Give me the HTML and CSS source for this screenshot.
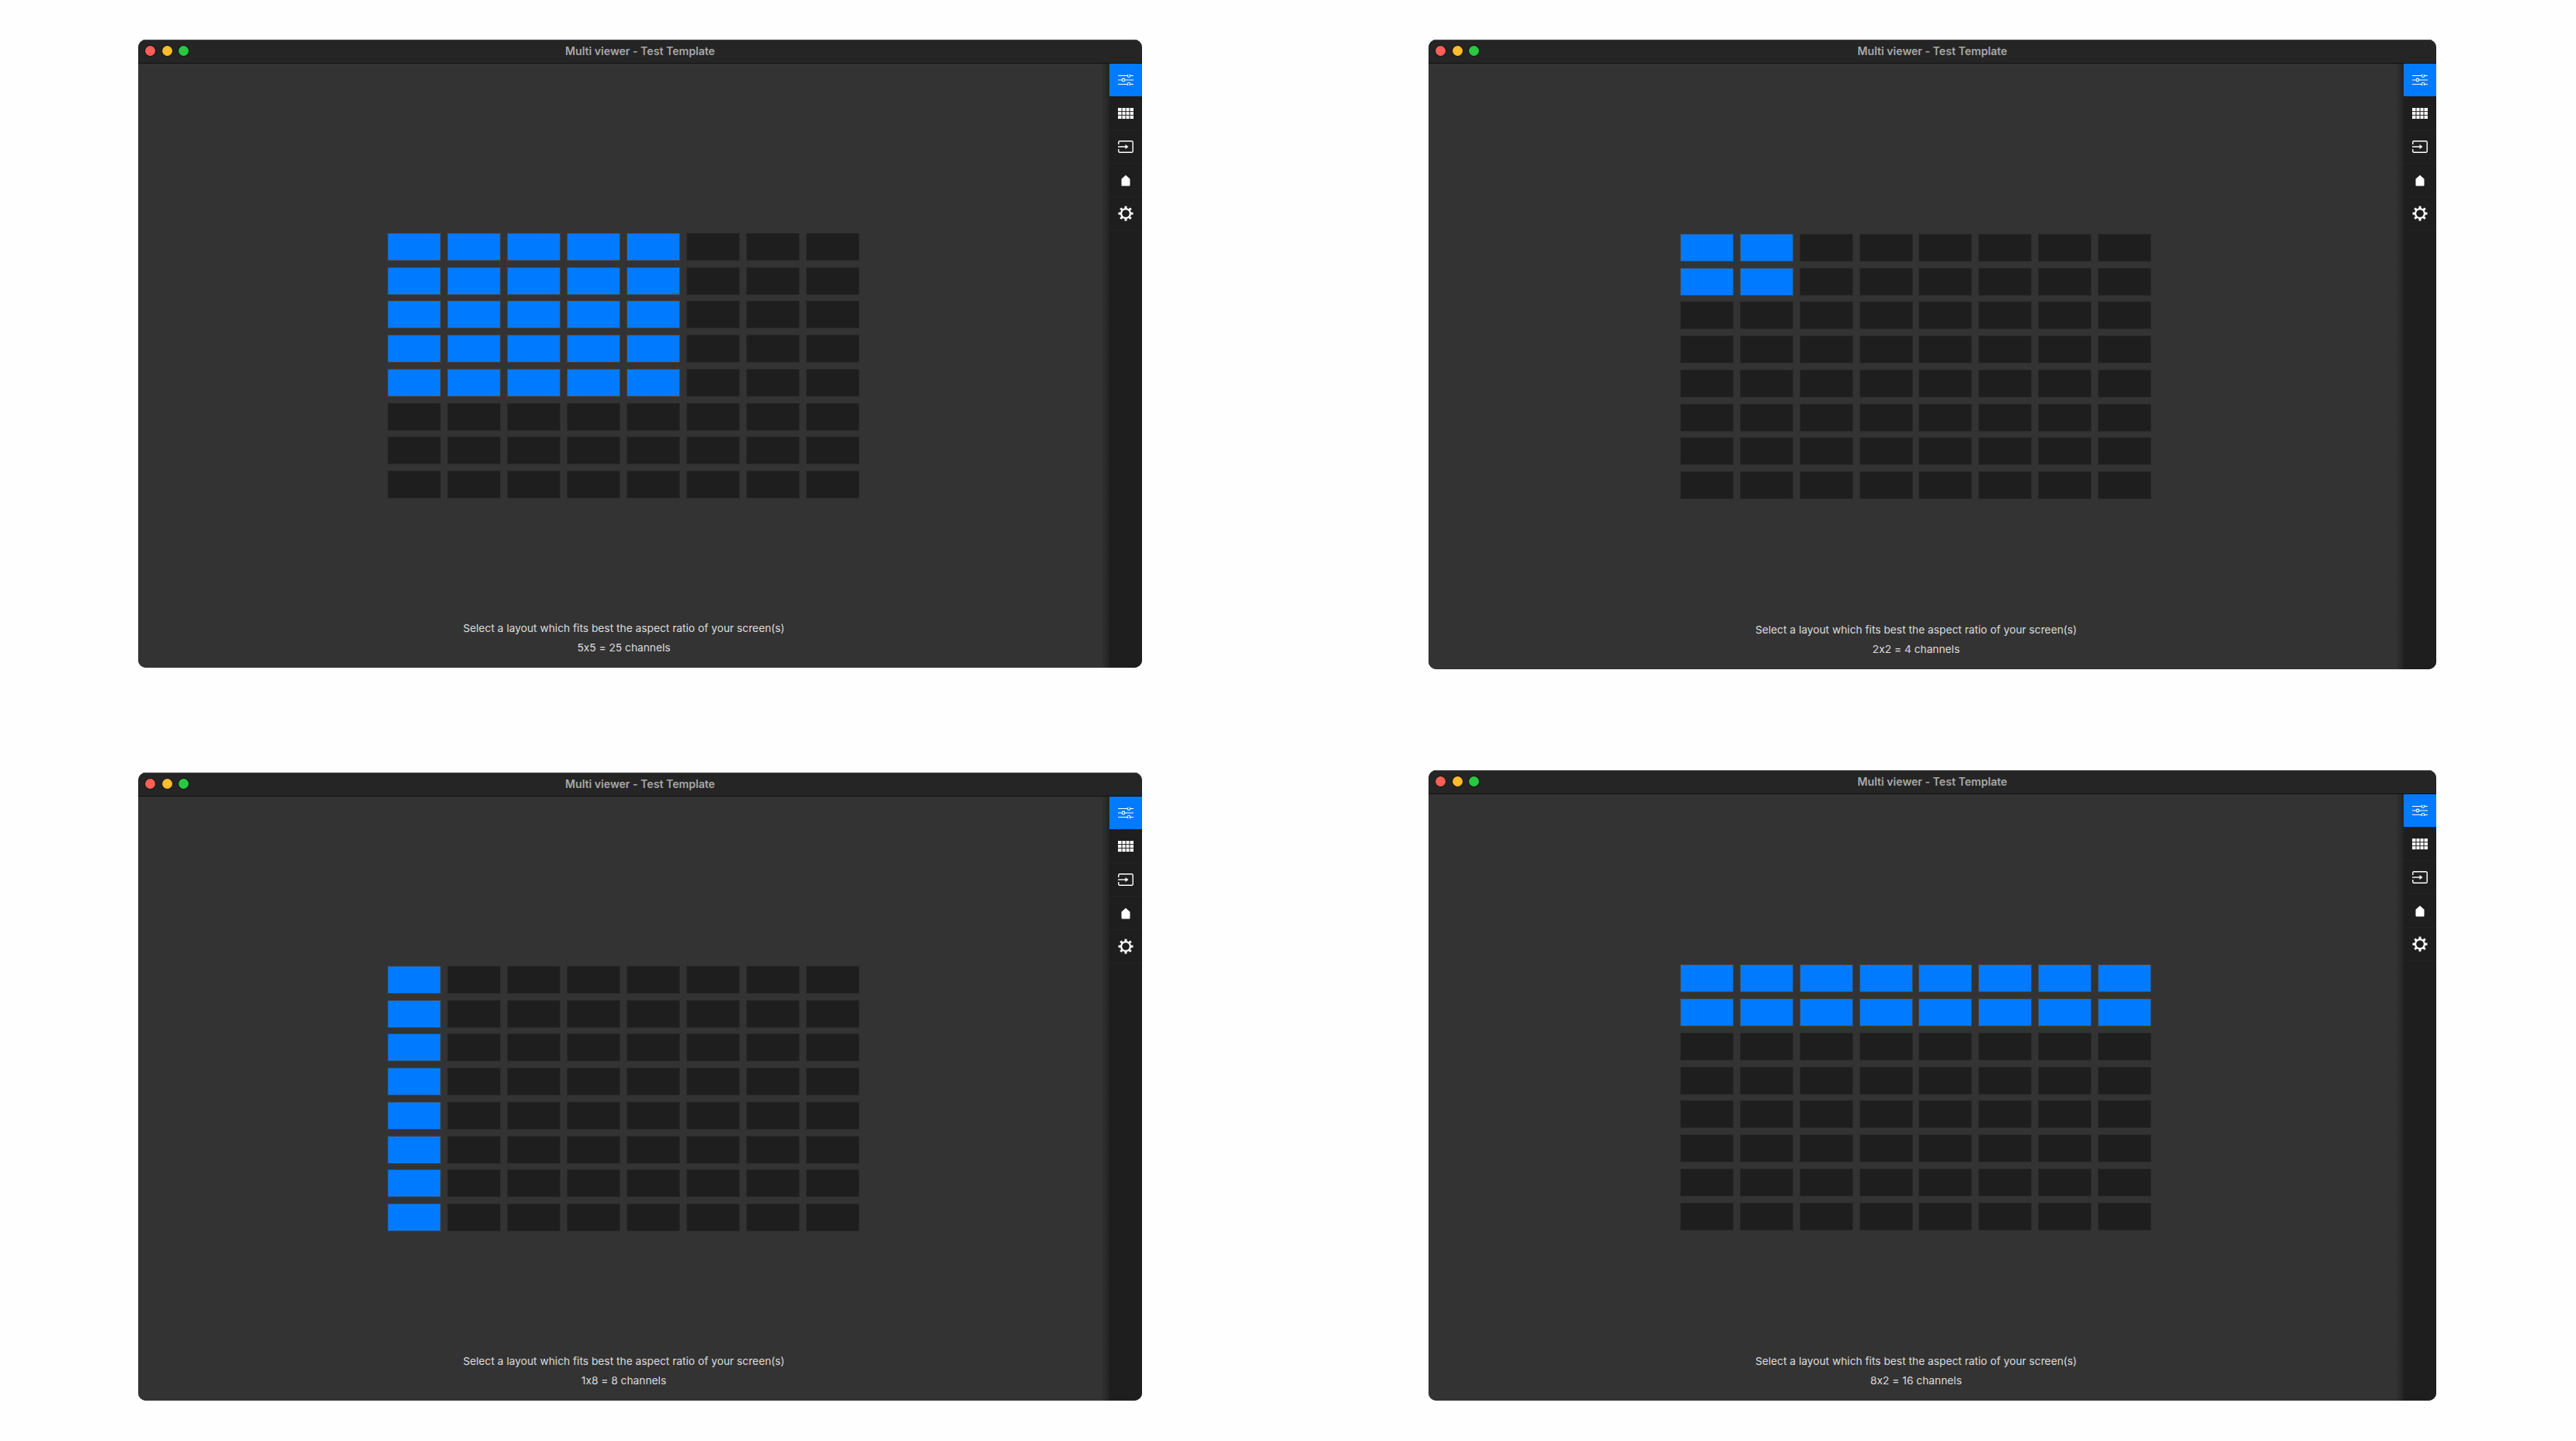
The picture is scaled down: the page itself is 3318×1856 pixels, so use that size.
FILE: index.html
```html
<!DOCTYPE html>
<html lang="en">
<head>
    <meta charset="UTF-8">
    <title>Multi viewer - Layouts</title>
    <link rel="stylesheet" href="styles.css">
</head>
<body>
    <svg class="icon-defs" width="0" height="0">
        <symbol id="icon-sliders" viewBox="0 0 20 14">
            <path d="M0 1.5H20M0 7H20M0 12.5H20" fill="none" stroke="#fff" stroke-width="1.2"/>
            <circle cx="14" cy="1.6" r="1.9" fill="#0a7aff" stroke="#fff" stroke-width="1.1"/>
            <circle cx="7" cy="7" r="1.9" fill="#0a7aff" stroke="#fff" stroke-width="1.1"/>
            <circle cx="14" cy="12.4" r="1.9" fill="#0a7aff" stroke="#fff" stroke-width="1.1"/>
        </symbol>
        <symbol id="icon-grid" viewBox="0 0 20 14">
            <path d="M0 0H20V14H0Z" fill="#fff"/>
            <path d="M5 0V14M10 0V14M15 0V14M0 4.67H20M0 9.33H20" stroke="#1e1e1e" stroke-width="1"/>
        </symbol>
        <symbol id="icon-input" viewBox="0 0 20 16">
            <path d="M.8 5V2.2A1.4 1.4 0 0 1 2.2 .8H17.8A1.4 1.4 0 0 1 19.2 2.2V13.8A1.4 1.4 0 0 1 17.8 15.2H2.2A1.4 1.4 0 0 1 .8 13.8V11" fill="none" stroke="#fff" stroke-width="1.4"/>
            <path d="M0 8H10" stroke="#fff" stroke-width="1.4"/>
            <path d="M9.5 5L13.5 8L9.500 11Z" fill="#fff"/>
        </symbol>
        <symbol id="icon-home" viewBox="0 0 12 15">
            <path d="M6 .5L11.500 5.500V13.500A1 1 0 0 1 10.500 14.500H1.500A1 1 0 0 1 .5 13.500V5.500Z" fill="#fff"/>
        </symbol>
        <symbol id="icon-gear" viewBox="0 0 20 20">
            <path d="M10 .5V19.500M.5 10H19.500M3.300 3.300L16.700 16.700M16.700 3.300L3.300 16.700" stroke="#fff" stroke-width="3"/>
            <circle cx="10" cy="10" r="7" fill="#fff"/>
            <circle cx="10" cy="10" r="4.800" fill="#1e1e1e"/>
        </symbol>
    </svg>

    <div class="row row-top">
        <section class="window window-narrow" data-cols="5" data-rows="5">
            <header class="titlebar">
                <span class="lights"><i class="light red"></i><i class="light yellow"></i><i class="light green"></i></span>
                <span class="title">Multi viewer - Test Template</span>
            </header>
            <div class="body">
                <main class="content">
                    <div class="layout-grid"></div>
                    <footer class="hint">
                        <p>Select a layout which fits best the aspect ratio of your screen(s)</p>
                        <p>5x5 = 25 channels</p>
                    </footer>
                </main>
                <nav class="sidebar">
                    <a class="tool active"><svg class="ic-sliders"><use href="#icon-sliders"/></svg></a>
                    <a class="tool"><svg class="ic-grid"><use href="#icon-grid"/></svg></a>
                    <a class="tool"><svg class="ic-input"><use href="#icon-input"/></svg></a>
                    <a class="tool"><svg class="ic-home"><use href="#icon-home"/></svg></a>
                    <a class="tool"><svg class="ic-gear"><use href="#icon-gear"/></svg></a>
                </nav>
            </div>
        </section>

        <section class="window window-wide window-tall" data-cols="2" data-rows="2">
            <header class="titlebar">
                <span class="lights"><i class="light red"></i><i class="light yellow"></i><i class="light green"></i></span>
                <span class="title">Multi viewer - Test Template</span>
            </header>
            <div class="body">
                <main class="content">
                    <div class="layout-grid"></div>
                    <footer class="hint">
                        <p>Select a layout which fits best the aspect ratio of your screen(s)</p>
                        <p>2x2 = 4 channels</p>
                    </footer>
                </main>
                <nav class="sidebar">
                    <a class="tool active"><svg class="ic-sliders"><use href="#icon-sliders"/></svg></a>
                    <a class="tool"><svg class="ic-grid"><use href="#icon-grid"/></svg></a>
                    <a class="tool"><svg class="ic-input"><use href="#icon-input"/></svg></a>
                    <a class="tool"><svg class="ic-home"><use href="#icon-home"/></svg></a>
                    <a class="tool"><svg class="ic-gear"><use href="#icon-gear"/></svg></a>
                </nav>
            </div>
        </section>
    </div>

    <div class="row row-bottom">
        <section class="window window-narrow" data-cols="1" data-rows="8">
            <header class="titlebar">
                <span class="lights"><i class="light red"></i><i class="light yellow"></i><i class="light green"></i></span>
                <span class="title">Multi viewer - Test Template</span>
            </header>
            <div class="body">
                <main class="content">
                    <div class="layout-grid"></div>
                    <footer class="hint">
                        <p>Select a layout which fits best the aspect ratio of your screen(s)</p>
                        <p>1x8 = 8 channels</p>
                    </footer>
                </main>
                <nav class="sidebar">
                    <a class="tool active"><svg class="ic-sliders"><use href="#icon-sliders"/></svg></a>
                    <a class="tool"><svg class="ic-grid"><use href="#icon-grid"/></svg></a>
                    <a class="tool"><svg class="ic-input"><use href="#icon-input"/></svg></a>
                    <a class="tool"><svg class="ic-home"><use href="#icon-home"/></svg></a>
                    <a class="tool"><svg class="ic-gear"><use href="#icon-gear"/></svg></a>
                </nav>
            </div>
        </section>

        <section class="window window-wide" data-cols="8" data-rows="2">
            <header class="titlebar">
                <span class="lights"><i class="light red"></i><i class="light yellow"></i><i class="light green"></i></span>
                <span class="title">Multi viewer - Test Template</span>
            </header>
            <div class="body">
                <main class="content">
                    <div class="layout-grid"></div>
                    <footer class="hint">
                        <p>Select a layout which fits best the aspect ratio of your screen(s)</p>
                        <p>8x2 = 16 channels</p>
                    </footer>
                </main>
                <nav class="sidebar">
                    <a class="tool active"><svg class="ic-sliders"><use href="#icon-sliders"/></svg></a>
                    <a class="tool"><svg class="ic-grid"><use href="#icon-grid"/></svg></a>
                    <a class="tool"><svg class="ic-input"><use href="#icon-input"/></svg></a>
                    <a class="tool"><svg class="ic-home"><use href="#icon-home"/></svg></a>
                    <a class="tool"><svg class="ic-gear"><use href="#icon-gear"/></svg></a>
                </nav>
            </div>
        </section>
    </div>

    <script src="script.js"></script>
</body>
</html>
```

FILE: styles.css
```css
body {
    margin: 0;
    background-color: #fefefe;
    font-family: Inter, "Liberation Sans", sans-serif;
    font-feature-settings: "calt" 0;
    overflow: hidden;
}
.icon-defs {
    position: absolute;
}
.row {
    display: flex;
    gap: 369px;
    padding-left: 178px;
}
.row-top {
    height: 992px;
    padding-top: 51px;
    box-sizing: border-box;
    align-items: flex-start;
}
.row-bottom {
    height: 812px;
    align-items: flex-end;
}
.window {
    display: flex;
    flex-direction: column;
    height: 809px;
    border-radius: 10px;
    overflow: hidden;
    background-color: #333;
}
.window-narrow {
    width: 1293px;
}
.window-wide {
    width: 1298px;
}
.window-tall {
    height: 811px;
}
.row-bottom .window-wide {
    height: 812px;
}

/* title bar */
.titlebar {
    display: flex;
    align-items: center;
    justify-content: center;
    position: relative;
    height: 31px;
    padding-bottom: 2px;
    box-sizing: border-box;
    background-color: #252525;
    border-top: 1px solid #4d4d4d;
    border-bottom: 1px solid #111;
}
.lights {
    position: absolute;
    left: 9px;
    top: 7px;
    display: flex;
    gap: 8.5px;
}
.light {
    width: 13px;
    height: 13px;
    border-radius: 50%;
    box-shadow: 0 0 0 1px #161616;
}
.red { background-color: #ff5f57; }
.yellow { background-color: #febc2e; }
.green { background-color: #28c840; }
.title {
    font-size: 14.1px;
    font-weight: 600;
    color: #a8a8a8;
}

/* main area */
.body {
    flex: 1;
    display: flex;
    min-height: 0;
}
.content {
    flex: 1;
    display: grid;
    grid-template-rows: 62px 1fr 62px;
    justify-items: center;
    align-items: center;
    background: linear-gradient(to left, #232323 0, #333 10px);
}
.layout-grid {
    grid-row: 2;
    display: grid;
    grid-template-columns: repeat(8, 69px);
    grid-auto-rows: 36px;
    column-gap: 7.9px;
    row-gap: 7.8px;
    margin-left: -1px;
}
.cell {
    box-sizing: border-box;
    background-color: #1e1e1e;
    border: 1px solid #2a2a2a;
}
.cell.on {
    background-color: #007aff;
    border-color: #444;
}
.hint {
    grid-row: 3;
    text-align: center;
    align-self: start;
    margin-top: -1px;
    font-size: 13.75px;
    line-height: 25px;
    color: #dcdcdc;
}
.hint p {
    margin: 0;
}

/* right tool bar */
.sidebar {
    width: 42px;
    background-color: #1e1e1e;
}
.tool {
    display: flex;
    align-items: center;
    justify-content: center;
    height: 43px;
    box-sizing: border-box;
    border-bottom: 1px solid #232323;
}
.tool.active {
    background-color: #007aff;
    border-bottom: none;
    height: 42px;
    margin-bottom: 1px;
}
.ic-sliders { width: 20px; height: 14px; }
.ic-grid { width: 20px; height: 14px; }
.ic-input { width: 20px; height: 16px; }
.ic-home { width: 12px; height: 15px; }
.ic-gear { width: 20px; height: 20px; }
```

FILE: script.js
```js
// fill every layout grid, first cols x rows cells are the selected ones
document.querySelectorAll('.window').forEach(function (win) {
    const cols = Number(win.dataset.cols);
    const rows = Number(win.dataset.rows);
    const grid = win.querySelector('.layout-grid');

    for (let r = 0; r < 8; r++) {
        for (let c = 0; c < 8; c++) {
            const cell = document.createElement('div');
            cell.className = c < cols && r < rows ? 'cell on' : 'cell';
            grid.appendChild(cell);
        }
    }
});
```
